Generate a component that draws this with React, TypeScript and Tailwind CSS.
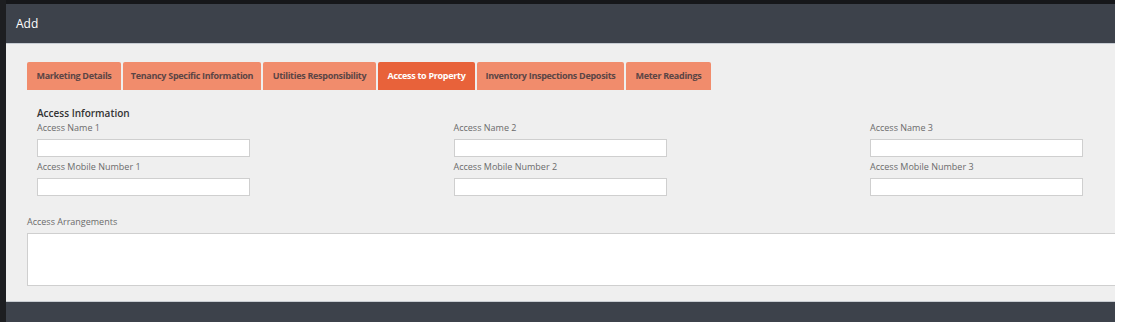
import React from 'react';

const tabs = [
  { label: 'Marketing Details', w: 'w-[94px]' },
  { label: 'Tenancy Specific Information', w: 'w-[138px]' },
  { label: 'Utilities Responsibility', w: 'w-[113px]' },
  { label: 'Access to Property', w: 'w-[97px]', active: true },
  { label: 'Inventory Inspections Deposits', w: 'w-[147px]' },
  { label: 'Meter Readings', w: 'w-[85px]' },
];

const Field = ({ label }: { label: string }) => (
  <div>
    <div className="h-[14px] leading-[14px] text-[9px] text-[#6b6b6b]">{label}</div>
    <div className="mt-[4px] h-[18px] w-[213px] bg-white border border-[#cfcfcf]" />
  </div>
);

const App: React.FC = () => {
  return (
    <div
      className="w-[1123px] h-[322px] flex bg-white overflow-hidden"
      style={{ fontFamily: '"Open Sans", "Noto Sans", sans-serif' }}
    >
      <div className="w-[6px] bg-[#1d1e21]" />
      <div className="w-[1109px] flex flex-col">
        <div className="h-[4px] bg-[#16171a]" />
        <div className="h-[40px] bg-[#3d424b] border-b border-[#c7ccd3] flex items-center pl-[10px]">
          <span className="text-white text-[12px] font-medium">Add</span>
        </div>
        <div className="h-[258px] bg-[#efefef] border-b border-[#c9cdd2] overflow-hidden pl-[21px] pt-[18px]">
          <div className="flex gap-[2px]">
            {tabs.map((t) => (
              <div
                key={t.label}
                className={`${t.w} h-[28px] rounded-t-[2px] flex items-center justify-center text-[9px] font-bold tracking-[-0.3px] ${
                  t.active ? 'bg-[#e8623a] text-white' : 'bg-[#f18c6c] text-[#5b4545]'
                }`}
              >
                {t.label}
              </div>
            ))}
          </div>

          <div className="pl-[10px] mt-[16px]">
            <div className="h-[14px] leading-[14px] text-[10px] font-semibold text-[#333]">
              Access Information
            </div>
            <div className="mt-[1px] grid grid-cols-[213px_213px_213px] gap-x-[203.5px] gap-y-[3px] w-[1300px]">
              <Field label="Access Name 1" />
              <Field label="Access Name 2" />
              <Field label="Access Name 3" />
              <Field label="Access Mobile Number 1" />
              <Field label="Access Mobile Number 2" />
              <Field label="Access Mobile Number 3" />
            </div>
          </div>

          <div className="mt-[19px] h-[14px] leading-[14px] text-[9px] text-[#6b6b6b]">
            Access Arrangements
          </div>
          <div className="mt-[4px] h-[53px] w-[1250px] bg-white border border-[#cfcfcf]" />
        </div>
        <div className="flex-1 bg-[#3d424b]" />
      </div>
    </div>
  );
};

export default App;
